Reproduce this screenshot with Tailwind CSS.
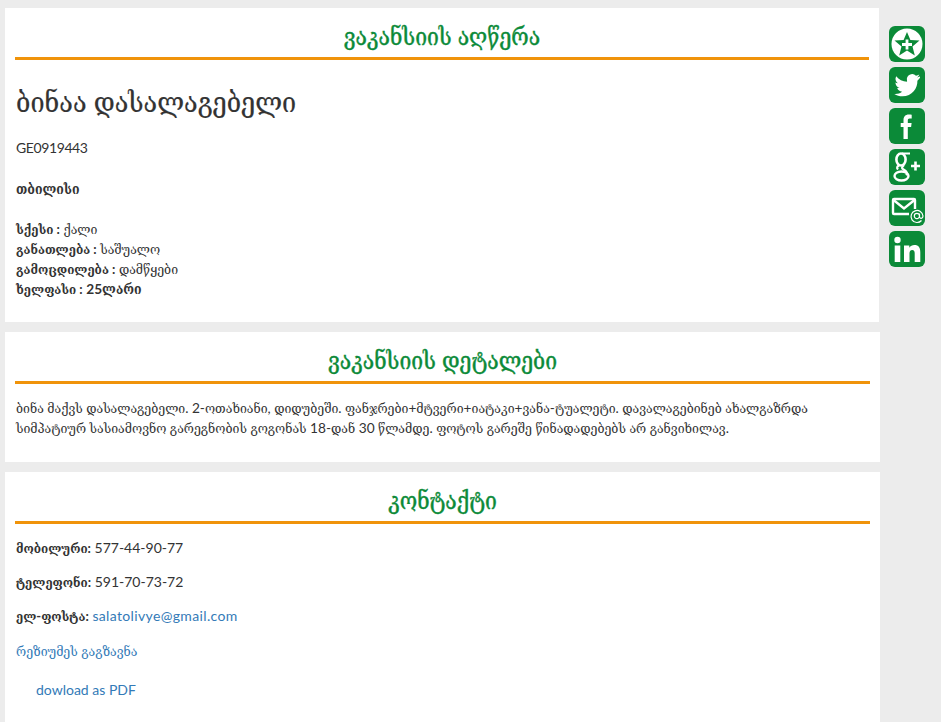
<!DOCTYPE html>
<html><head><meta charset="utf-8"><script src="https://cdn.jsdelivr.net/npm/@tailwindcss/browser@4"></script></head>
<body class="bg-[#ececec] overflow-hidden h-[722px] font-['Lato','DejaVu_Serif_Condensed',serif] text-[#333]">
<div class="flex pl-[5px] pt-2 items-start">
<main class="w-[875px] flex flex-col gap-[10px]">
<section class="bg-white px-[10px] h-[314px] w-[874px]">
<h2 class="h-[52px] border-b-[3px] border-[#f0930a] text-center text-[#0b8a38] text-[23.500px] [-webkit-text-stroke:0.4px_#0b8a38] leading-[57px]">ვაკანსიის აღწერა</h2>
<h1 class="text-[28px] leading-[30px] mt-[26px] pl-px [-webkit-text-stroke:0.2px_#333]">ბინაა დასალაგებელი</h1>
<p class="text-[14px] leading-5 mt-[22px] pl-px tracking-[-0.4px]">GE0919443</p>
<p class="text-[13.700px] leading-5 mt-[21px] pl-px font-bold">თბილისი</p>
<div class="text-[13.700px] leading-5 mt-[20px] pl-px">
<p><b class="text-[13px]">სქესი :</b> ქალი</p>
<p><b class="text-[13px]">განათლება :</b> საშუალო</p>
<p><b class="text-[13px]">გამოცდილება :</b> დამწყები</p>
<p><b class="text-[13px]">ხელფასი :</b> <b>25ლარი</b></p>
</div>
</section>
<section class="bg-white px-[10px] h-[130px]">
<h2 class="h-[52px] border-b-[3px] border-[#f0930a] text-center text-[#0b8a38] text-[23.500px] [-webkit-text-stroke:0.4px_#0b8a38] leading-[57px]">ვაკანსიის დეტალები</h2>
<p class="text-[13.700px] leading-5 mt-[14px] pl-px">ბინა მაქვს დასალაგებელი. 2-ოთახიანი, დიდუბეში. ფანჯრები+მტვერი+იატაკი+ვანა-ტუალეტი. დავალაგებინებ ახალგაზრდა სიმპატიურ სასიამოვნო გარეგნობის გოგონას 18-დან 30 წლამდე. ფოტოს გარეშე წინადადებებს არ განვიხილავ.</p>
</section>
<section class="bg-white px-[10px] h-[260px]">
<h2 class="h-[52px] border-b-[3px] border-[#f0930a] text-center text-[#0b8a38] text-[23.500px] [-webkit-text-stroke:0.4px_#0b8a38] leading-[57px]">კონტაქტი</h2>
<p class="text-[14px] leading-5 mt-[14px] pl-px"><b class="text-[13px]">მობილური:</b> 577-44-90-77</p>
<p class="text-[14px] leading-5 mt-[14px] pl-px"><b class="text-[13px]">ტელეფონი:</b> 591-70-73-72</p>
<p class="text-[14px] leading-5 mt-[14px] pl-px"><b class="text-[13px]">ელ-ფოსტა:</b> <a class="text-[#337ab7] tracking-[0.35px]">salatolivye@gmail.com</a></p>
<p class="text-[13.700px] leading-5 mt-[15px] pl-px text-[#337ab7]">რეზიუმეს გაგზავნა</p>
<p class="text-[14px] leading-5 mt-[19px] pl-[21px] text-[#337ab7]">dowload as PDF</p>
</section>
</main>
<aside class="ml-[9px] mt-[18px] flex flex-col gap-[5px]">
<svg class="w-9 h-9 block" viewBox="0 0 36 36"><rect width="36" height="36" rx="6" fill="#0b8a38"/><circle cx="18" cy="18" r="15.500" fill="#fff"/><path d="M18 6l3.400 8 9.100.6-7 5.800 2.300 9.100L18 24.600l-7.800 4.900 2.300-9.100-7-5.800 9.100-.6z" fill="#0b8a38"/><path d="M16.600 13.500h2.800v3.600H23v2.800h-3.600v3.600h-2.800v-3.600H13v-2.800h3.600z" fill="#fff"/></svg>
<svg class="w-9 h-9 block" viewBox="0 0 36 36"><rect width="36" height="36" rx="6" fill="#0b8a38"/><path d="M31 9.600c-1 .4-2 .7-3 .8 1.100-.7 1.900-1.700 2.300-2.900-1 .6-2.100 1-3.300 1.300A5.300 5.300 0 0 0 18 13.600c0 .4 0 .8.100 1.200C13.700 14.600 9.800 12.500 7.200 9.300c-1.400 2.400-.7 5.500 1.600 7-.9 0-1.700-.3-2.400-.7 0 2.600 1.800 4.800 4.200 5.300-.8.200-1.600.2-2.400.1.700 2.100 2.600 3.600 4.900 3.700-2.200 1.700-5 2.500-7.800 2.200 2.400 1.500 5.200 2.400 8.100 2.400 9.800 0 15.300-8.200 15-15.600 1-.8 1.900-1.800 2.600-2.900z" fill="#fff"/></svg>
<svg class="w-9 h-9 block" viewBox="0 0 36 36"><rect width="36" height="36" rx="6" fill="#0b8a38"/><path d="M14.500 31V19h-2.800v-4h2.800v-3c0-3.400 2-5.500 5.200-5.500 1.200 0 2.300.1 3 .2v3.800h-2c-1.500 0-1.900.8-1.900 2V15h3.800l-.5 4h-3.300v12z" fill="#fff"/></svg>
<svg class="w-9 h-9 block" viewBox="0 0 36 36"><rect width="36" height="36" rx="6" fill="#0b8a38"/><g fill="none" stroke="#fff"><ellipse cx="12" cy="10.500" rx="4.600" ry="6" stroke-width="2.600"/><ellipse cx="12.500" cy="27" rx="7" ry="4.500" stroke-width="2.400"/><path d="M15 16c-2 2-3 3-.5 4.500 3 1.800 4.500 3.500 2.500 5.500M10 16.500c-2 1-2.500 2.500-1 4M13 4.500h8" stroke-width="2.200"/><path d="M26.500 12.500v9M22 17h9" stroke-width="2.600"/></g></svg>
<svg class="w-9 h-9 block" viewBox="0 0 36 36"><rect width="36" height="36" rx="6" fill="#0b8a38"/><path d="M26 19V10q0-1-1-1H5q-1 0-1 1v13q0 1 1 1h15" fill="none" stroke="#fff" stroke-width="2.400"/><path d="M4.500 10l10.500 8.500L25.500 10" fill="none" stroke="#fff" stroke-width="2.400"/><circle cx="28" cy="26" r="6.300" fill="#0b8a38"/><path d="M32.500 30.500A6 6 0 1 1 34 26c0 3-3.500 3-3.500 .5v-3M30.500 26a2.600 2.600 0 1 1-5.200 0 2.600 2.600 0 0 1 5.200 0z" fill="none" stroke="#fff" stroke-width="1.200"/></svg>
<svg class="w-9 h-9 block" viewBox="0 0 36 36"><rect width="36" height="36" rx="6" fill="#0b8a38"/><circle cx="8.500" cy="9" r="3.200" fill="#fff"/><path d="M5.700 14.500h5.600V31H5.700zM15 14.500h5.300v2.300c1-1.700 3-2.700 5-2.700 4.500 0 6 2.700 6 7.200V31h-5.600v-8.500c0-2.200-.6-3.600-2.500-3.600-2 0-2.700 1.500-2.700 3.600V31H15z" fill="#fff"/></svg>
</aside>
</div>
</body></html>
